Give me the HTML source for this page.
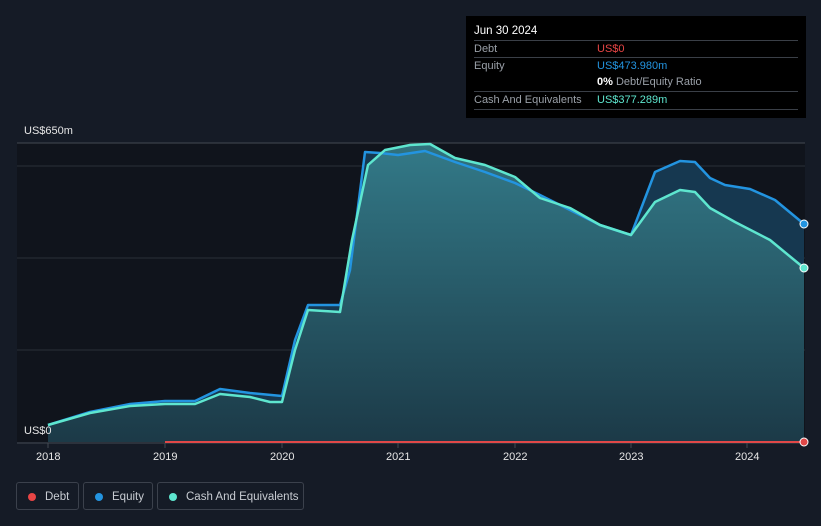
<!DOCTYPE html>
<html><head><style>
body{margin:0;width:821px;height:526px;background:#151b26;font-family:"Liberation Sans",sans-serif;overflow:hidden;position:relative}
.tip{position:absolute;left:466px;top:16px;width:340px;height:102px;background:#000;color:#fff;font-size:11px}
.tip .h{position:absolute;left:8px;top:9px;font-size:11.5px}
.row{position:absolute;left:8px;width:324px;height:17px;border-top:1px solid #3a3f47;line-height:17px;color:#9aa0a8}
.row span{position:absolute;left:123px}
.ax{position:absolute;color:#e6e6e6;font-size:11px}
.leg{position:absolute;top:482px;height:28px;border:1px solid #3b414c;border-radius:3px;color:#c8ccd2;font-size:11.5px;line-height:28px;box-sizing:border-box}
.leg i{position:absolute;left:11px;top:10px;width:8px;height:8px;border-radius:50%}
</style></head><body>
<svg width="821" height="526" style="position:absolute;left:0;top:0">
<defs><linearGradient id="g" x1="0" y1="0" x2="0" y2="1"><stop offset="0" stop-color="#3a8a96" stop-opacity=".8"/><stop offset="1" stop-color="#1d3a45" stop-opacity=".8"/></linearGradient></defs>
<rect x="17" y="143" width="788" height="299" fill="#10141c"/>
<line x1="17" y1="143" x2="805" y2="143" stroke="#444a52"/>
<line x1="17" y1="166" x2="805" y2="166" stroke="#2a2f37"/>
<line x1="17" y1="258" x2="805" y2="258" stroke="#2a2f37"/>
<line x1="17" y1="350" x2="805" y2="350" stroke="#2a2f37"/>
<path d="M48,425 L90,412 L130,404 L165,401 L195,401 L220,389 L250,393 L282,396 L295,340 L308,305 L340,305 L350,270 L365,152 L380,153 L398,155 L425,151 L455,162 L485,172 L515,183 L540,195 L570,210 L600,225 L631,235 L655,172 L680,161 L695,162 L710,178 L725,185 L750,189 L775,200 L804,224 L804,442 L48,442Z" fill="#163850"/>
<path d="M48,425 L90,413 L130,406 L165,404 L195,404 L220,394 L250,397 L270,402 L282,402 L295,350 L308,310 L340,312 L352,240 L368,165 L385,150 L410,145 L430,144 L455,158 L485,165 L515,177 L540,198 L570,208 L600,225 L631,235 L655,202 L680,190 L695,192 L710,208 L735,222 L770,240 L804,268 L804,442 L48,442Z" fill="url(#g)"/>
<polyline points="48,425 90,412 130,404 165,401 195,401 220,389 250,393 282,396 295,340 308,305 340,305 350,270 365,152 380,153 398,155 425,151 455,162 485,172 515,183 540,195 570,210 600,225 631,235 655,172 680,161 695,162 710,178 725,185 750,189 775,200 804,224" fill="none" stroke="#2394e0" stroke-width="2.5" stroke-linejoin="round"/>
<polyline points="48,425 90,413 130,406 165,404 195,404 220,394 250,397 270,402 282,402 295,350 308,310 340,312 352,240 368,165 385,150 410,145 430,144 455,158 485,165 515,177 540,198 570,208 600,225 631,235 655,202 680,190 695,192 710,208 735,222 770,240 804,268" fill="none" stroke="#5ee6cf" stroke-width="2.5" stroke-linejoin="round"/>
<line x1="17" y1="443" x2="805" y2="443" stroke="#444a52"/>
<line x1="165" y1="442" x2="804" y2="442" stroke="#e04848" stroke-width="2"/>
<circle cx="804" cy="224" r="4" fill="#2394e0" stroke="#fff" stroke-width="1"/>
<circle cx="804" cy="268" r="4" fill="#5ee6cf" stroke="#fff" stroke-width="1"/>
<circle cx="804" cy="442" r="4" fill="#e04848" stroke="#fff" stroke-width="1"/>
<g stroke="#444a52"><line x1="48" y1="443" x2="48" y2="448"/><line x1="165" y1="443" x2="165" y2="448"/><line x1="282" y1="443" x2="282" y2="448"/><line x1="398" y1="443" x2="398" y2="448"/><line x1="515" y1="443" x2="515" y2="448"/><line x1="631" y1="443" x2="631" y2="448"/><line x1="747" y1="443" x2="747" y2="448"/></g>
</svg>
<div class="ax" style="left:24px;top:125px">US$650m</div>
<div class="ax" style="left:24px;top:425px">US$0</div>
<div class="ax" style="left:36px;top:451px">2018</div>
<div class="ax" style="left:153px;top:451px">2019</div>
<div class="ax" style="left:270px;top:451px">2020</div>
<div class="ax" style="left:386px;top:451px">2021</div>
<div class="ax" style="left:503px;top:451px">2022</div>
<div class="ax" style="left:619px;top:451px">2023</div>
<div class="ax" style="left:735px;top:451px">2024</div>
<div class="tip">
<div class="h">Jun 30 2024</div>
<div class="row" style="top:24px">Debt<span style="color:#e84545">US$0</span></div>
<div class="row" style="top:41px">Equity<span style="color:#2394e0">US$473.980m</span></div>
<div class="row" style="top:58px;border-top:none"><span><b style="color:#fff">0%</b> Debt/Equity Ratio</span></div>
<div class="row" style="top:75px;border-bottom:1px solid #3a3f47">Cash And Equivalents<span style="color:#5ee6cf">US$377.289m</span></div>
</div>
<div class="leg" style="left:16px;width:63px"><i style="background:#e84545"></i><span style="position:absolute;left:28px">Debt</span></div>
<div class="leg" style="left:83px;width:70px"><i style="background:#2394e0"></i><span style="position:absolute;left:28px">Equity</span></div>
<div class="leg" style="left:157px;width:147px"><i style="background:#5ee6cf"></i><span style="position:absolute;left:28px">Cash And Equivalents</span></div>
</body></html>
